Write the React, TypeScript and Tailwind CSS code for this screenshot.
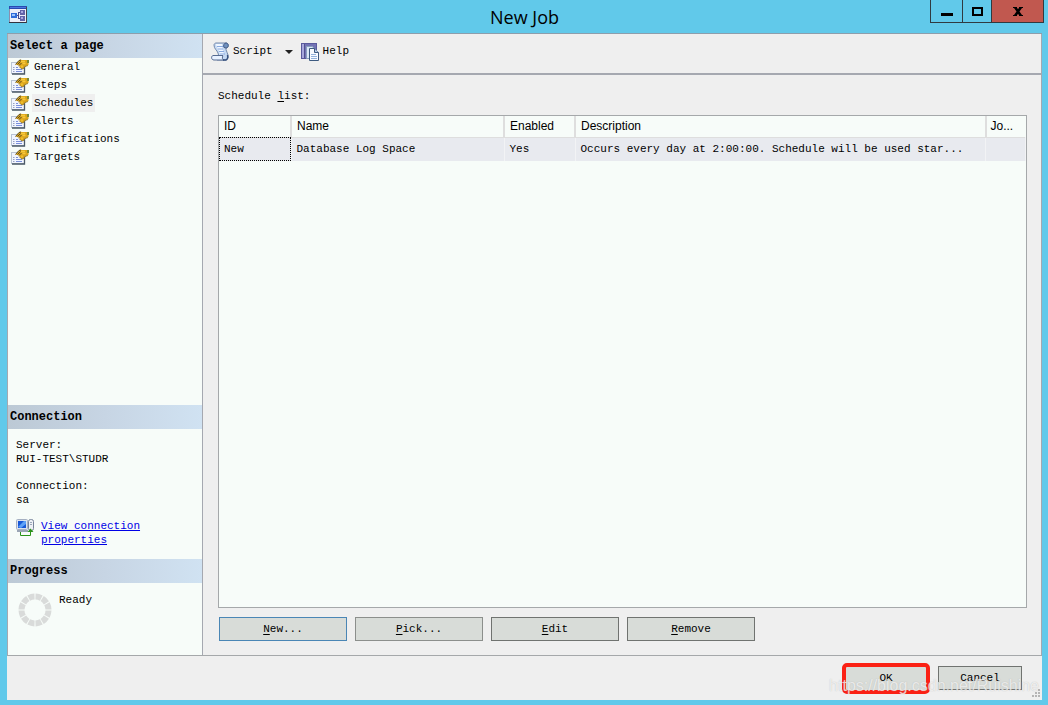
import type { ReactNode } from 'react';

const mono = "font-['Liberation_Mono',monospace]";
const pages = ['General', 'Steps', 'Schedules', 'Alerts', 'Notifications', 'Targets'];

function AppIcon() {
  return (
    <svg width="18" height="17" viewBox="0 0 18 17" aria-hidden="true" shapeRendering="crispEdges">
      <rect width="18" height="17" fill="#8a8fae" />
      <rect x="1" y="3" width="16" height="13" fill="#eceef8" />
      <rect width="18" height="3" fill="#2a49b0" />
      <rect x="1" y="1" width="16" height="1" fill="#4a78e0" />
      <rect y="16" width="18" height="1" fill="#33333f" />
      <rect x="17" y="1" width="1" height="16" fill="#44444f" />
      <rect x="2" y="7" width="6" height="5" fill="#2f6bd8" />
      <rect x="3" y="8" width="3" height="2" fill="#9cc4ff" />
      <path d="M8 9.500h1M9.500 6v7M9 6.500h2M9 12.500h2" stroke="#4c4c8c" fill="none" />
      <rect x="11" y="4" width="5" height="5" fill="#6363a8" />
      <rect x="12" y="5" width="2" height="2" fill="#a9a9e0" />
      <rect x="11" y="10" width="5" height="5" fill="#6363a8" />
      <rect x="12" y="11" width="2" height="2" fill="#a9a9e0" />
    </svg>
  );
}

function PageIcon() {
  return (
    <svg width="18" height="16" viewBox="0 0 18 16" aria-hidden="true">
      <rect x="0.5" y="3.5" width="13" height="11" fill="#f1f5ff" stroke="#b9c4d4" />
      <path d="M13.500 7v8H1" fill="none" stroke="#4a5866" strokeWidth="1.300" />
      <path d="M2 8.500h1.500M2 10.500h1.500M2 12.500h1.500" stroke="#98a4c0" />
      <path d="M5 8.500h2M5 10.500h6M5 12.500h6" stroke="#7a8fdc" />
      <path d="M4.500 5.500L8 1.500Q9 0.500 11 1h5l1.500 1v4L14 7.500 12 10 9.500 9 8 6.500z" fill="#dba51c" />
      <path d="M4.500 5.500L8 1.500 10 1M6.500 5.500l3-3M8 6.500l2.500-2.500" fill="none" stroke="#5c4d20" />
      <path d="M10 2.500h4M11.500 4.500h3" stroke="#f7c93c" strokeWidth="1.500" />
      <path d="M10 7.500l2 0" stroke="#f0c02c" strokeWidth="2" />
      <path d="M8 7.500l2 2 2 .500 2-2.500 3-1" fill="none" stroke="#8b7020" strokeWidth="0.800" />
      <path d="M16 1h2v3h-2z" fill="#7a8a38" />
    </svg>
  );
}

function ScriptIcon() {
  return (
    <svg width="19" height="19" viewBox="0 0 19 19" aria-hidden="true">
      <path d="M5 1h10c3 0 3 5 0 5-1 2 3 6 2 10l-2 2H6c2-2 2-4 1-7C6 8 3 7 3 3c0-1 1-2 2-2z" fill="#c5d9f3" stroke="#7489ab" />
      <path d="M5 3c2 4 4 7 4 11h4c0-4-2-7-2-12H5z" fill="#f1f7ff" />
      <path d="M13 5.500c-1-2 0-4.500 2-4.500 3 0 3 5 0 5z" fill="#6f91bf" stroke="#435b85" />
      <path d="M6 4.500h6M7 7h5M8 9.500h5M9 12h5" stroke="#88a9df" />
      <path d="M2 13.500h10c-1 2-1 4 1 4.500H3c-3 0-3-4-1-4.500z" fill="#e8f1ff" stroke="#566b91" />
      <path d="M12 18h3c2-1 2-3 1.500-5" stroke="#36507e" strokeWidth="1.500" fill="none" />
    </svg>
  );
}

function HelpIcon() {
  return (
    <svg width="19" height="18" viewBox="0 0 19 18" aria-hidden="true">
      <rect x="0.5" y="0.5" width="15" height="15" fill="#7373b4" stroke="#5a5a9c" />
      <rect x="1" y="1" width="2" height="14" fill="#a8a8dc" />
      <path d="M3.500 1v14" stroke="#52528f" />
      <path d="M5.500 3.500h6l2 3v9h-8z" fill="#dbe8f8" stroke="#8aa0be" />
      <path d="M8.500 5.500h5l4 4v8h-9z" fill="#f7fbff" stroke="#3d5a80" />
      <path d="M13.500 5.500v4h4" fill="#b5cbe4" stroke="#3d5a80" />
      <path d="M10 11.500h5M10 13.500h6M10 15.500h6" stroke="#92b2dc" />
    </svg>
  );
}

function ConnectionIcon() {
  return (
    <svg width="19" height="18" viewBox="0 0 19 18" aria-hidden="true">
      <rect x="0.5" y="0.5" width="11" height="10" rx="1" fill="#dce3ee" stroke="#a5b0c2" />
      <rect x="2" y="2" width="8" height="7" fill="#1658d8" />
      <path d="M2 8l6-6h2v3l-5 4z" fill="#5ea1f6" />
      <path d="M1 12h11" stroke="#9aa5b5" strokeWidth="2" />
      <rect x="12.5" y="0.5" width="5" height="11" rx="2" fill="#eef1f6" stroke="#77849a" />
      <path d="M14 3.500h2M14 5.500h2" stroke="#9ba8b8" />
      <path d="M4.500 13v3.500h10V11" fill="none" stroke="#2a9418" />
      <path d="M11.500 13l3-3.500 3 3.500z" fill="#2a9418" />
    </svg>
  );
}

function Spinner() {
  return (
    <svg width="34" height="34" viewBox="0 0 34 34" aria-hidden="true">
      <circle cx="17" cy="17" r="13.500" fill="none" stroke="#d9dbda" strokeWidth="6" pathLength="120" strokeDasharray="8.500 1.500" strokeDashoffset="-0.750" />
    </svg>
  );
}

function SectionTitle({ children }: { children: ReactNode }) {
  return (
    <h2 className="flex h-6 shrink-0 items-center bg-linear-to-r from-[#bcc9d5] via-[#c7d5e4] to-[#d0e2f2] px-0.5 text-xs font-bold">
      {children}
    </h2>
  );
}

function PushButton({ letter, rest, tone }: { letter: string; rest: string; tone: string }) {
  return (
    <button type="button" className={`h-6 w-32 border bg-[#d8dcd8] ${tone}`}>
      <span className="underline underline-offset-2">{letter}</span>{rest}
    </button>
  );
}

export default function App() {
  return (
    <div className={`relative flex min-h-screen flex-col bg-[#61c9ea] pb-[5px] pl-[7px] pr-1.5 text-[11px] text-black ${mono}`}>
      <header className="grid h-[33px] shrink-0 grid-cols-[1fr_auto_1fr]">
        <div className="px-0.5 pt-1.5"><AppIcon /></div>
        <h1 className="self-center font-['Open_Sans',sans-serif] text-lg leading-6">New Job</h1>
        <div className="-mr-0.5 flex h-[23px] justify-self-end border border-t-0 border-[#303a40]">
          <button type="button" aria-label="Minimize" className="flex w-8 items-center justify-center border-r border-[#303a40]">
            <svg width="12" height="12" aria-hidden="true"><path d="M0 8h12v3H0z" /></svg>
          </button>
          <button type="button" aria-label="Maximize" className="flex w-[29px] items-center justify-center border-r border-[#303a40]">
            <svg width="11" height="9" aria-hidden="true"><path d="M1 1h9v7H1z" fill="none" stroke="#000" strokeWidth="2" /></svg>
          </button>
          <button type="button" aria-label="Close" className="flex w-[51px] items-center justify-center bg-[#c1584f]">
            <svg width="10" height="9" aria-hidden="true"><path d="M0 0h4v1l1 1 1-1V0h4v1H9L6.500 4.500 9 8h1v1H6V8L5 7 4 8v1H0V8h1l2.500-3.500L1 1H0z" /></svg>
          </button>
        </div>
      </header>

      <div className="flex grow flex-col border-t border-[#8d9eac] bg-[#efefef]">
        <div className="flex grow border-b border-[#a5a8aa]">
          <aside className="flex w-[196px] shrink-0 flex-col border-x border-[#a5a8b0] bg-[#f7fcf9]">
            <SectionTitle>Select a page</SectionTitle>
            <nav className="grow">
              <ul>
                {pages.map((page) => (
                  <li key={page} className="flex h-[18px] items-center gap-[3px] pl-[3px]">
                    <PageIcon />
                    <a href="#" className={page === 'Schedules' ? 'bg-[#efefef] px-0.5 leading-[18px]' : 'px-0.5 leading-[18px]'}>{page}</a>
                  </li>
                ))}
              </ul>
            </nav>
            <SectionTitle>Connection</SectionTitle>
            <div className="h-[130px] shrink-0 px-2 pt-[9px] leading-[14px]">
              <p>Server:</p>
              <p>RUI-TEST\STUDR</p>
              <p className="pt-[13px]">Connection:</p>
              <p>sa</p>
              <div className="flex gap-1.5 pt-3">
                <div className="shrink-0"><ConnectionIcon /></div>
                <a href="#" className="text-[#0000e6] underline">View connection<br />properties</a>
              </div>
            </div>
            <SectionTitle>Progress</SectionTitle>
            <div className="flex h-[72px] shrink-0 gap-[7px] px-2.5 pt-2.5">
              <Spinner />
              <p className="leading-[14px]">Ready</p>
            </div>
          </aside>

          <main className="flex min-w-0 grow flex-col border-r border-[#a5a8b0]">
            <div className="flex h-[41px] shrink-0 items-center border-b-2 border-[#a5a8b0] px-2 pb-1">
              <button type="button" className="flex items-center gap-[3px]"><ScriptIcon />Script</button>
              <button type="button" aria-label="Script options" className="pl-3 pr-2">
                <svg width="8" height="4" aria-hidden="true"><path d="M0 0h8L4 4z" fill="#222" /></svg>
              </button>
              <button type="button" className="flex items-center gap-[3px]"><HelpIcon />Help</button>
            </div>
            <div className="flex grow flex-col pb-[14px] pl-[15px] pr-[14px] pt-3">
              <p id="list-label" className="h-7 leading-[18px]">Schedule <span className="underline underline-offset-2">l</span>ist:</p>
              <div className="grow border border-[#a5a8aa] bg-[#f7fcf9]">
                <table aria-labelledby="list-label" className="w-full table-fixed border-collapse text-left">
                  <colgroup>
                    <col className="w-[72px]" />
                    <col className="w-[213px]" />
                    <col className="w-[71px]" />
                    <col />
                    <col className="w-10" />
                  </colgroup>
                  <thead>
                    <tr className="h-[21px] border-b border-[#dedede] font-['Liberation_Sans',sans-serif] text-xs *:border-r-2 *:border-[#dedede] *:px-[5px] *:font-normal *:last:border-r-0 *:last:px-1">
                      <th>ID</th><th>Name</th><th>Enabled</th><th>Description</th><th>Jo...</th>
                    </tr>
                  </thead>
                  <tbody>
                    <tr className="h-6 bg-[#e8eaef] *:border-r *:border-[#f2f3f5] *:px-[5px]">
                      <td className="outline outline-dotted -outline-offset-1 outline-black">New</td>
                      <td>Database Log Space</td>
                      <td>Yes</td>
                      <td className="overflow-hidden whitespace-nowrap">Occurs every day at 2:00:00. Schedule will be used star...</td>
                      <td />
                    </tr>
                  </tbody>
                </table>
              </div>
              <div className="flex gap-2 pl-px pt-[9px]">
                <PushButton letter="N" rest="ew..." tone="border-[#4a86b5]" />
                <PushButton letter="P" rest="ick..." tone="border-[#8c8f8c]" />
                <PushButton letter="E" rest="dit" tone="border-[#707370]" />
                <PushButton letter="R" rest="emove" tone="border-[#707370]" />
              </div>
            </div>
          </main>
        </div>

        <footer className="flex h-11 shrink-0 items-center justify-end gap-2 pr-5">
          <button type="button" className="h-[31px] w-[88px] rounded-[5px] border-4 border-[#fb2114] bg-[#d8dcd8]">OK</button>
          <button type="button" className="h-6 w-[84px] border border-[#707370] bg-[#d8dcd8]">Cancel</button>
        </footer>
      </div>

      <svg className="absolute bottom-[7px] right-[7px]" width="9" height="9" aria-hidden="true">
        <path d="M6 0h2v2H6zM3 3h2v2H3zM6 3h2v2H6zM0 6h2v2H0zM3 6h2v2H3zM6 6h2v2H6z" fill="#b5b5b5" />
      </svg>
      <p className="pointer-events-none absolute bottom-[7px] right-[9px] font-['Liberation_Sans',sans-serif] text-base leading-6 text-white/70 [text-shadow:0_0_1px_#9999]">https://blog.csdn.net/Ruishine</p>
    </div>
  );
}
